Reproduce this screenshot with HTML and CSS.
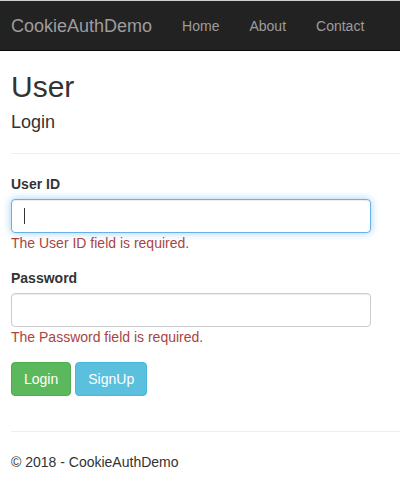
FILE: index.html
```html
<!DOCTYPE html>
<html>
<head>
<meta charset="utf-8">
<title>User - CookieAuthDemo</title>
<link rel="stylesheet" href="styles.css">
</head>
<body>
<div class="topline"></div>
<nav class="navbar">
  <a class="brand" href="#">CookieAuthDemo</a>
  <ul class="nav">
    <li><a href="#">Home</a></li>
    <li><a href="#">About</a></li>
    <li><a href="#">Contact</a></li>
  </ul>
</nav>
<div class="body-content">
  <h2>User</h2>
  <h4>Login</h4>
  <hr>
  <form class="form">
    <div class="form-group">
      <label>User ID</label>
      <div class="form-control focused"><span class="caret"></span></div>
      <span class="field-error">The User ID field is required.</span>
    </div>
    <div class="form-group">
      <label>Password</label>
      <div class="form-control"></div>
      <span class="field-error">The Password field is required.</span>
    </div>
    <div class="form-group buttons">
      <button type="button" class="btn btn-success">Login</button>
      <button type="button" class="btn btn-info">SignUp</button>
    </div>
  </form>
  <hr>
  <footer>
    <p>&copy; 2018 - CookieAuthDemo</p>
  </footer>
</div>
</body>
</html>
```
FILE: styles.css
```css
* { box-sizing: border-box; }
html, body {
  margin: 0;
  padding: 0;
  background: #fff;
}
body {
  font-family: "Liberation Sans", Arial, Helvetica, sans-serif;
  font-size: 14px;
  line-height: 1.42857143;
  color: #333;
  overflow: hidden;
}
.topline {
  height: 1px;
  background: #cfcfcf;
}
.navbar {
  display: flex;
  align-items: stretch;
  height: 50px;
  background: #222;
  border-bottom: 1px solid #080808;
}
.brand {
  font-size: 18px;
  line-height: 20px;
  padding: 15px 15px 14px 11px;
  color: #9d9d9d;
  text-decoration: none;
}
.nav {
  display: flex;
  list-style: none;
  margin: 0;
  padding: 0;
}
.nav a {
  display: block;
  padding: 15px 15px 14px;
  line-height: 20px;
  color: #9d9d9d;
  text-decoration: none;
}
.body-content {
  padding-left: 11px;
}
h2 {
  font-size: 30px;
  font-weight: 500;
  line-height: 1.1;
  margin: 19px 0 10px;
}
h4 {
  font-size: 18px;
  font-weight: 500;
  line-height: 1.1;
  margin: 10px 0 10px;
}
hr {
  margin: 20px 0;
  border: 0;
  border-top: 1px solid #eee;
  height: 0;
}
.form {
  display: flow-root;
  margin: 0;
}
.form-group {
  margin-bottom: 15px;
}
label {
  display: inline-block;
  font-weight: bold;
  margin-bottom: 5px;
}
.form-control {
  display: flex;
  align-items: center;
  width: 360px;
  height: 34px;
  padding: 6px 12px;
  border: 1px solid #ccc;
  border-radius: 4px;
  background: #fff;
  box-shadow: inset 0 1px 1px rgba(0,0,0,.075);
}
.form-control.focused {
  border-color: #66afe9;
  box-shadow: inset 0 1px 1px rgba(0,0,0,.075), 0 0 8px rgba(102,175,233,.6);
}
.caret {
  display: block;
  width: 1px;
  height: 16px;
  background: #333;
}
.field-error {
  display: block;
  color: #a94442;
}
.buttons {
  display: flex;
  gap: 4px;
}
.btn {
  font-family: inherit;
  font-size: 14px;
  line-height: 20px;
  padding: 6px 12px;
  border: 1px solid transparent;
  border-radius: 4px;
  color: #fff;
  cursor: pointer;
}
.btn-success {
  background: #5cb85c;
  border-color: #4cae4c;
}
.btn-info {
  background: #5bc0de;
  border-color: #46b8da;
}
footer p {
  margin: 0 0 10px;
}
```
